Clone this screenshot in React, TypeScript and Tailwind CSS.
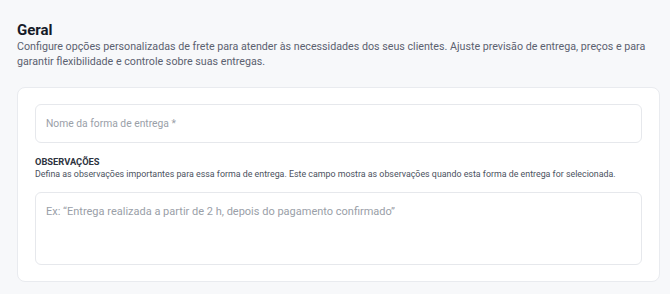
export default function App() {
  return (
    <div className="min-h-[294px] w-[670px] bg-[#f7f8fa] pl-[17px] pr-[10px] pt-[21px] pb-[12px]" style={{ fontFamily: "Roboto, 'Liberation Sans', sans-serif" }}>
      <h2 className="text-[15px] font-bold leading-[18px] text-[#151b28]">Geral</h2>
      <p className="text-[10.7px] leading-[15px] text-[#5b6170]">
        Configure opções personalizadas de frete para atender às necessidades dos seus clientes. Ajuste previsão de entrega, preços e para garantir flexibilidade e controle sobre suas entregas.
      </p>
      <div className="mt-[18px] rounded-[8px] border border-[#e9ebef] bg-white px-[17px] pt-[16px] pb-[16px]">
        <div className="flex h-[39px] items-center rounded-[6px] border border-[#e6e8ec] px-[10px] text-[10.3px] text-[#9aa0a8]">
          Nome da forma de entrega *
        </div>
        <div className="mt-[13px] text-[9.3px] font-bold leading-[12px] text-[#2d3340]">OBSERVAÇÕES</div>
        <div className="text-[8.85px] leading-[12px] text-[#4b5260]">
          Defina as observações importantes para essa forma de entrega. Este campo mostra as observações quando esta forma de entrega for selecionada.
        </div>
        <div className="mt-[12px] h-[73px] rounded-[6px] border border-[#e6e8ec] px-[10px] pt-[11px] text-[11px] leading-[16px] text-[#9aa0a8]">
          Ex: “Entrega realizada a partir de 2 h, depois do pagamento confirmado”
        </div>
      </div>
    </div>
  );
}
